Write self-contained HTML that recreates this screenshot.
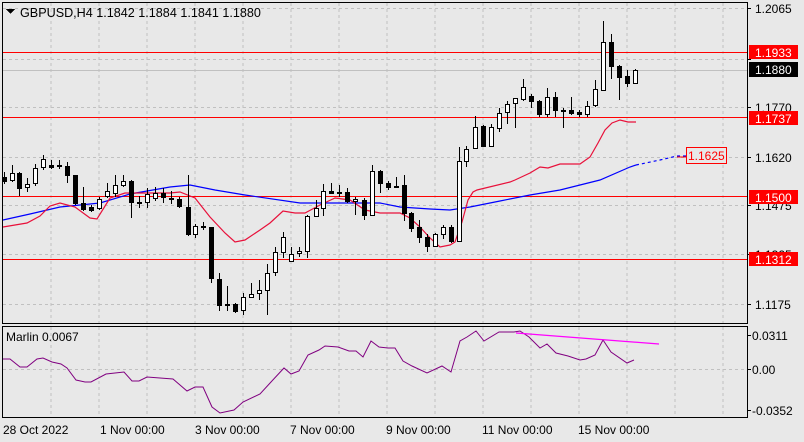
<!DOCTYPE html>
<html><head><meta charset="utf-8"><style>
html,body{margin:0;padding:0;background:#e8e8e8;}
svg{display:block;font-family:"Liberation Sans",Tahoma,sans-serif;}
</style></head><body>
<svg width="804" height="442" viewBox="0 0 804 442" xmlns="http://www.w3.org/2000/svg" shape-rendering="crispEdges">
<rect width="804" height="442" fill="#e8e8e8"/>
<g stroke="#c0c0c0" stroke-dasharray="3,3" stroke-width="1">
<path d="M51 3V323M99 3V323M147 3V323M195 3V323M243 3V323M291 3V323M339 3V323M387 3V323M435 3V323M483 3V323M531 3V323M579 3V323M627 3V323M675 3V323M723 3V323"/>
<path d="M51 327V417M99 327V417M147 327V417M195 327V417M243 327V417M291 327V417M339 327V417M387 327V417M435 327V417M483 327V417M531 327V417M579 327V417M627 327V417M675 327V417M723 327V417"/>
<path d="M3 8.5H747M3 59.5H747M3 107.5H747M3 157.5H747M3 205.5H747M3 254.5H747M3 304.5H747M3 369.5H747"/>
</g>
<path d="M3 70.5H747" stroke="#c0c0c0"/>
<g fill="#ff0000">
<rect x="3" y="52" width="744" height="1"/>
<rect x="3" y="117" width="744" height="1"/>
<rect x="3" y="196" width="744" height="1"/>
<rect x="3" y="259" width="744" height="1"/>
</g>
<g shape-rendering="auto" fill="none" stroke-width="1.2">
<polyline stroke="#0000ff" points="3,220 30,214 60,207 100,203 130,194 170,187 190,185 215,190 245,195 300,203 340,203 380,203 400,207 430,209 450,210 470,207 500,201 530,195 560,190 600,180 630,167 636,165"/>
<polyline stroke="#0000ff" stroke-dasharray="3,3" points="636,165 660,160 677,156 686,156"/>
<polyline stroke="#e8103a" points="3,227 27,223 40,216 50,206 60,203 75,207 90,218 97,219 110,198 125,193 170,193 180,192 195,198 210,217 225,233 235,242 245,240 260,230 270,223 283,211 295,213 305,213 320,205 335,198 350,200 365,210 380,213 400,213 410,218 420,227 430,238 440,247 450,245 455,242 462,222 468,200 473,192 477,190 510,182 515,180 530,173 540,167 548,168 560,164 580,164 590,157 598,143 605,130 612,123 620,120 628,122 636,122"/>
</g>
<g stroke="#000" stroke-width="1">
<path d="M4.5 172V184M12.5 165V182M19.5 172V196M27.5 178V192M35.5 164V186M43.5 155V170M51.5 160V169M59.5 160V169M67.5 162V183M75.5 175V205M83.5 187V211M91.5 205V212M99.5 197V210M107.5 183V198M115.5 175V197M123.5 175V187M131.5 180V218M139.5 196V208M147.5 188V208M155.5 187V201M163.5 188V203M171.5 191V204M179.5 197V208M188.5 175V236M195.5 224V238M203.5 222V230M211.5 227V283M219.5 273V311M227.5 286V311M235.5 303V313M243.5 293V315M251.5 283V298M259.5 280V300M267.5 264V315M275.5 247V276M283.5 232V258M291.5 247V262M299.5 247V257M307.5 215V258M316.5 200V217M323.5 184V216M331.5 183V194M339.5 185V197M347.5 188V203M355.5 197V215M364.5 198V220M372.5 165V216M380.5 170V193M388.5 181V190M396.5 177V187M404.5 175V221M411.5 212V232M419.5 220V243M427.5 234V252M435.5 233V247M443.5 225V239M451.5 225V243M459.5 147V241M466.5 146V167M475.5 116V149M483.5 125V147M491.5 124V147M499.5 108V132M507.5 101V124M515.5 98V128M523.5 79V101M531.5 94V108M539.5 100V117M547.5 88V117M555.5 92V117M563.5 108V128M571.5 97V115M579.5 110V117M587.5 101V117M595.5 80V107M603.5 21V91M611.5 34V79M619.5 65V100M627.5 70V87M635.5 69V84"/>
</g>
<g fill="#000" stroke="#000">
<rect x="2.5" y="177.5" width="4" height="4"/><rect x="17.5" y="173.5" width="4" height="15"/><rect x="49.5" y="165.5" width="4" height="2"/><rect x="57.5" y="165.5" width="4" height="1"/><rect x="65.5" y="166.5" width="4" height="9"/><rect x="73.5" y="175.5" width="4" height="28"/><rect x="81.5" y="203.5" width="4" height="6"/><rect x="89.5" y="207.5" width="4" height="3"/><rect x="129.5" y="181.5" width="4" height="21"/><rect x="137.5" y="202.5" width="4" height="1"/><rect x="161.5" y="193.5" width="4" height="4"/><rect x="169.5" y="198.5" width="4" height="1"/><rect x="177.5" y="199.5" width="4" height="7"/><rect x="186.5" y="207.5" width="4" height="27"/><rect x="201.5" y="226.5" width="4" height="1"/><rect x="209.5" y="227.5" width="4" height="51"/><rect x="217.5" y="279.5" width="4" height="26"/><rect x="225.5" y="304.5" width="4" height="1"/><rect x="233.5" y="304.5" width="4" height="7"/><rect x="329.5" y="191.5" width="4" height="2"/><rect x="337.5" y="192.5" width="4" height="1"/><rect x="345.5" y="192.5" width="4" height="9"/><rect x="362.5" y="200.5" width="4" height="15"/><rect x="378.5" y="171.5" width="4" height="12"/><rect x="386.5" y="183.5" width="4" height="4"/><rect x="394.5" y="186.5" width="4" height="1"/><rect x="402.5" y="185.5" width="4" height="28"/><rect x="409.5" y="213.5" width="4" height="15"/><rect x="417.5" y="227.5" width="4" height="10"/><rect x="425.5" y="237.5" width="4" height="9"/><rect x="449.5" y="227.5" width="4" height="14"/><rect x="481.5" y="126.5" width="4" height="20"/><rect x="529.5" y="96.5" width="4" height="5"/><rect x="537.5" y="101.5" width="4" height="13"/><rect x="553.5" y="97.5" width="4" height="13"/><rect x="561.5" y="110.5" width="4" height="1"/><rect x="569.5" y="110.5" width="4" height="3"/><rect x="577.5" y="112.5" width="4" height="2"/><rect x="609.5" y="42.5" width="4" height="24"/><rect x="617.5" y="66.5" width="4" height="11"/><rect x="625.5" y="76.5" width="4" height="7"/>
</g>
<g fill="#fff" stroke="#000">
<rect x="10.5" y="173.5" width="4" height="7"/><rect x="25.5" y="184.5" width="4" height="3"/><rect x="33.5" y="168.5" width="4" height="15"/><rect x="41.5" y="159.5" width="4" height="8"/><rect x="97.5" y="199.5" width="4" height="9"/><rect x="105.5" y="191.5" width="4" height="5"/><rect x="113.5" y="185.5" width="4" height="8"/><rect x="121.5" y="181.5" width="4" height="4"/><rect x="145.5" y="194.5" width="4" height="8"/><rect x="153.5" y="193.5" width="4" height="5"/><rect x="193.5" y="226.5" width="4" height="8"/><rect x="241.5" y="297.5" width="4" height="13"/><rect x="249.5" y="294.5" width="4" height="3"/><rect x="257.5" y="290.5" width="4" height="3"/><rect x="265.5" y="273.5" width="4" height="17"/><rect x="273.5" y="252.5" width="4" height="20"/><rect x="281.5" y="237.5" width="4" height="15"/><rect x="289.5" y="254.5" width="4" height="7"/><rect x="297.5" y="251.5" width="4" height="2"/><rect x="305.5" y="216.5" width="4" height="35"/><rect x="314.5" y="208.5" width="4" height="8"/><rect x="321.5" y="191.5" width="4" height="17"/><rect x="353.5" y="199.5" width="4" height="2"/><rect x="370.5" y="171.5" width="4" height="44"/><rect x="433.5" y="234.5" width="4" height="12"/><rect x="441.5" y="227.5" width="4" height="7"/><rect x="457.5" y="161.5" width="4" height="80"/><rect x="464.5" y="149.5" width="4" height="12"/><rect x="473.5" y="127.5" width="4" height="21"/><rect x="489.5" y="127.5" width="4" height="19"/><rect x="497.5" y="113.5" width="4" height="15"/><rect x="505.5" y="104.5" width="4" height="8"/><rect x="513.5" y="98.5" width="4" height="5"/><rect x="521.5" y="87.5" width="4" height="12"/><rect x="545.5" y="97.5" width="4" height="17"/><rect x="585.5" y="106.5" width="4" height="8"/><rect x="593.5" y="89.5" width="4" height="16"/><rect x="601.5" y="42.5" width="4" height="48"/><rect x="633.5" y="70.5" width="4" height="13"/>
</g>
<g shape-rendering="auto" fill="none">
<polyline stroke="#800080" stroke-width="1" points="3,359 10,359 20,367 27,367 37,359 43,358 52,362 61,364 67,368 76,380 85,382 91,382 106,374 124,372 132,381 139,381 147,377 160,378 173,379 187,391 195,387 203,387 212,407 220,413 234,410 243,402 260,394 271,382 284,368 291,374 299,371 308,355 319,350 325,346 338,347 349,351 356,351 363,357 371,341 379,347 388,348 395,348 403,361 412,366 427,373 442,366 451,372 460,341 467,337 476,331 484,341 499,332 514,332 520,331 529,337 540,348 547,344 556,353 568,356 580,360 586,359 595,355 603,340 611,352 627,363 634,360"/>
<polyline stroke="#ff00ff" stroke-width="1.2" points="516,333 659,344"/>
<path d="M677 157H686" stroke="#ff0000"/>
</g>
<g fill="none" stroke="#000" stroke-width="1">
<path d="M2.5 2.5H747.5V323.5H2.5Z"/>
<path d="M2.5 326.5H747.5V417.5H2.5Z"/>
<path d="M747 8.5h4M747 59.5h4M747 107.5h4M747 157.5h4M747 205.5h4M747 254.5h4M747 304.5h4M747 335.5h4M747 369.5h4M747 410.5h4"/>
</g>
<path d="M6 9h9l-4.5 5z" fill="#000"/>
<g font-size="12" fill="#000">
<text x="20" y="17" font-size="12.6">GBPUSD,H4  1.1842 1.1884 1.1841 1.1880</text>
<text x="6" y="341">Marlin 0.0067</text>
<text x="755" y="13">1.2065</text>
<text x="755" y="112">1.1770</text>
<text x="755" y="162">1.1620</text>
<text x="755" y="210">1.1475</text>
<text x="755" y="259">1.1325</text>
<text x="755" y="309">1.1175</text>
<text x="752" y="340">0.0311</text>
<text x="752" y="374">0.00</text>
<text x="752" y="415">-0.0352</text>
<text x="3" y="434">28 Oct 2022</text>
<text x="100" y="434">1 Nov 00:00</text>
<text x="195" y="434">3 Nov 00:00</text>
<text x="290" y="434">7 Nov 00:00</text>
<text x="386" y="434">9 Nov 00:00</text>
<text x="482" y="434">11 Nov 00:00</text>
<text x="578" y="434">15 Nov 00:00</text>
</g>
<rect x="749" y="45" width="49" height="14" fill="#ff0000"/>
<rect x="749" y="62" width="49" height="15" fill="#000"/>
<rect x="749" y="111" width="49" height="14" fill="#ff0000"/>
<rect x="749" y="190" width="49" height="14" fill="#ff0000"/>
<rect x="749" y="252" width="49" height="14" fill="#ff0000"/>
<rect x="686.5" y="147.5" width="40" height="16" fill="#e8e8e8" stroke="#ff0000"/>
<g font-size="12" fill="#fff">
<text x="755" y="57">1.1933</text>
<text x="755" y="74">1.1880</text>
<text x="755" y="123">1.1737</text>
<text x="755" y="202">1.1500</text>
<text x="755" y="264">1.1312</text>
</g>
<text x="688" y="160" font-size="12" fill="#ff0000">1.1625</text>
</svg>
</body></html>
